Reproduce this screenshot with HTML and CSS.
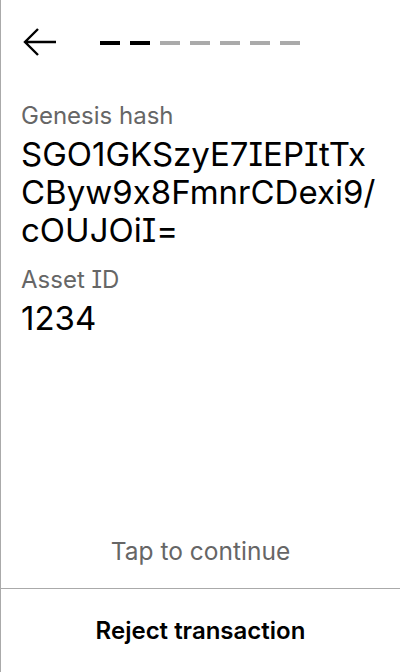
FILE: index.html
```html
<!DOCTYPE html>
<html>
<head>
<meta charset="utf-8">
<link rel="stylesheet" href="styles.css">
</head>
<body>
<div class="screen">
  <header class="header">
    <button class="back" aria-label="Back">
      <svg width="36" height="30" viewBox="0 0 36 30">
        <path d="M34 14H3M16 1L3 14L16 27" fill="none" stroke="#000" stroke-width="2.4" stroke-linecap="butt" stroke-linejoin="miter"/>
      </svg>
    </button>
    <div class="progress">
      <span class="dash on"></span>
      <span class="dash on"></span>
      <span class="dash"></span>
      <span class="dash"></span>
      <span class="dash"></span>
      <span class="dash"></span>
      <span class="dash"></span>
    </div>
  </header>
  <main class="content">
    <div class="field">
      <div class="label">Genesis hash</div>
      <div class="value">SGO1GKSzyE7IEPItTxCByw9x8FmnrCDexi9/cOUJOiI=</div>
    </div>
    <div class="field">
      <div class="label">Asset ID</div>
      <div class="value">1234</div>
    </div>
  </main>
  <div class="tap">Tap to continue</div>
  <div class="reject">Reject transaction</div>
</div>
</body>
</html>
```
FILE: styles.css
```css
* { box-sizing: border-box; }
html, body { margin: 0; padding: 0; background: #fff; }
body {
  font-family: Inter, "Noto Sans", sans-serif;
  font-optical-sizing: none;
  font-feature-settings: "calt" 0, "cv08" 1;
  color: #000;
}
.screen {
  width: 400px;
  height: 672px;
  border-left: 1px solid #aaa;
  display: flex;
  flex-direction: column;
}
.header {
  display: flex;
  align-items: center;
  height: 86px;
  padding-left: 21px;
}
.back {
  border: 0;
  background: none;
  padding: 0;
  width: 36px;
  height: 30px;
  display: flex;
}
.progress {
  display: flex;
  gap: 10px;
  margin-left: 42px;
  margin-top: -1px;
}
.dash {
  width: 20px;
  height: 4px;
  background: #aaa;
}
.dash.on { background: #000; }
.content {
  flex: 1;
  padding: 15px 12px 0 20px;
}
.label {
  font-size: 24px;
  line-height: 30px;
  color: #666;
}
.value {
  font-size: 33px;
  line-height: 38px;
  word-break: break-all;
  margin-top: 4px;
  margin-bottom: 16px;
}
.tap {
  text-align: center;
  font-size: 24.5px;
  line-height: 28px;
  color: #666;
  padding-bottom: 23px;
}
.reject {
  border-top: 1px solid #aaa;
  height: 84px;
  display: flex;
  align-items: center;
  justify-content: center;
  font-size: 24px;
  font-weight: 600;
}
```
